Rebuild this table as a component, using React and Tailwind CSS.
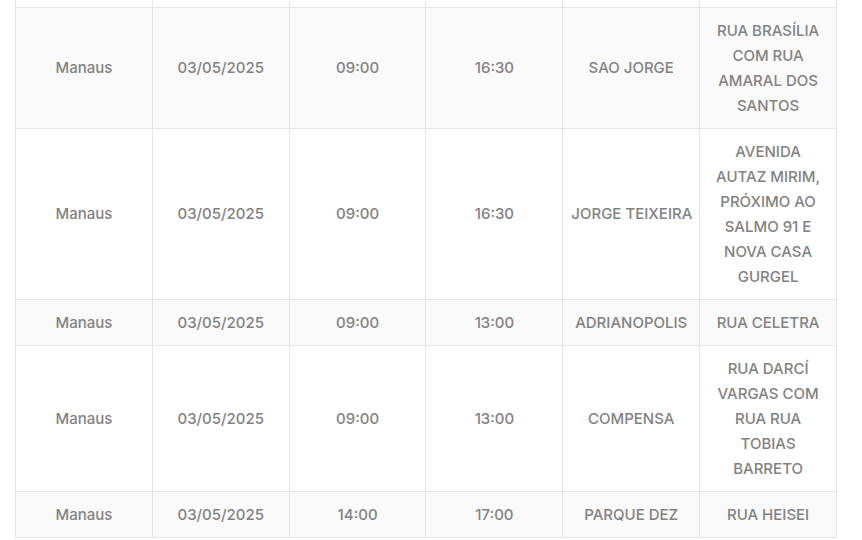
const rows = [
  { city: 'Manaus', date: '03/05/2025', start: '09:00', end: '16:30', area: 'SAO JORGE', addr: ['RUA BRASÍLIA', 'COM RUA', 'AMARAL DOS', 'SANTOS'] },
  { city: 'Manaus', date: '03/05/2025', start: '09:00', end: '16:30', area: 'JORGE TEIXEIRA', addr: ['AVENIDA', 'AUTAZ MIRIM,', 'PRÓXIMO AO', 'SALMO 91 E', 'NOVA CASA', 'GURGEL'] },
  { city: 'Manaus', date: '03/05/2025', start: '09:00', end: '13:00', area: 'ADRIANOPOLIS', addr: ['RUA CELETRA'] },
  { city: 'Manaus', date: '03/05/2025', start: '09:00', end: '13:00', area: 'COMPENSA', addr: ['RUA DARCÍ', 'VARGAS COM', 'RUA RUA', 'TOBIAS', 'BARRETO'] },
  { city: 'Manaus', date: '03/05/2025', start: '14:00', end: '17:00', area: 'PARQUE DEZ', addr: ['RUA HEISEI'] },
];

const cell = 'border-r border-b border-[#e6e6e6] px-2 py-[10px] text-center align-middle whitespace-nowrap';

export default function App() {
  return (
    <div className="min-h-[540px] bg-white overflow-hidden font-['Inter','Liberation_Sans',sans-serif] text-[15px] leading-[25px] text-[#828282] font-medium">
      <div className="ml-[15px] w-[822px]">
        <table className="w-full table-fixed border-collapse border-l border-[#e6e6e6]">
          <tbody>
            {/* tail of the row scrolled above */}
            <tr className="bg-white">
              {[0, 1, 2, 3, 4, 5].map((i) => (
                <td key={i} className="border-r border-b border-[#e6e6e6] h-[7px] p-0" />
              ))}
            </tr>
            {rows.map((r, i) => (
              <tr key={i} className={i % 2 === 0 ? 'bg-[#fafafa]' : 'bg-white'}>
                <td className={cell}>{r.city}</td>
                <td className={cell}>{r.date}</td>
                <td className={cell}>{r.start}</td>
                <td className={cell}>{r.end}</td>
                <td className={cell}>{r.area}</td>
                <td className={cell}>
                  {r.addr.map((line, j) => (
                    <div key={j}>{line}</div>
                  ))}
                </td>
              </tr>
            ))}
          </tbody>
        </table>
      </div>
    </div>
  );
}
